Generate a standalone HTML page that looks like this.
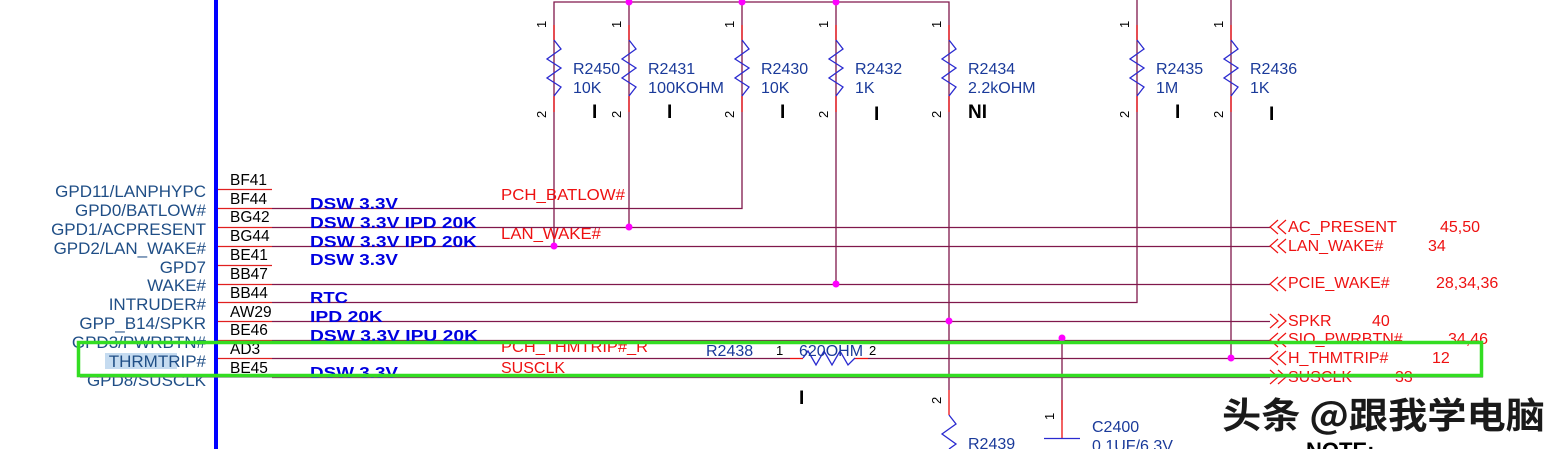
<!DOCTYPE html>
<html><head><meta charset="utf-8">
<style>
html,body{margin:0;padding:0;background:#fff;width:1561px;height:449px;overflow:hidden}
svg{display:block}
.pn{font:17px "Liberation Sans",sans-serif;fill:#1f4e86;text-anchor:end}
.pin{font:15.5px "Liberation Sans",sans-serif;fill:#000}
.bl{font:bold 16px "Liberation Sans",sans-serif;fill:#0000e0}
.rd{font:16px "Liberation Sans",sans-serif;fill:#ee1111}
.nv{font:16px "Liberation Sans",sans-serif;fill:#1a3a9a}
.sm{font:13px "Liberation Sans",sans-serif;fill:#000}
.I{font:bold 19px "Liberation Sans",sans-serif;fill:#000}
</style></head><body>
<svg width="1561" height="449" viewBox="0 0 1561 449" xmlns="http://www.w3.org/2000/svg">
<rect x="214" y="0" width="4" height="449" fill="#0000ff"/>
<rect x="105" y="353" width="72" height="16" fill="#9ec3e6" opacity="0.6"/>
<g class="pn">
<text x="206" y="197">GPD11/LANPHYPC</text>
<text x="206" y="216">GPD0/BATLOW#</text>
<text x="206" y="235">GPD1/ACPRESENT</text>
<text x="206" y="254">GPD2/LAN_WAKE#</text>
<text x="206" y="273">GPD7</text>
<text x="206" y="291">WAKE#</text>
<text x="206" y="310">INTRUDER#</text>
<text x="206" y="329">GPP_B14/SPKR</text>
<text x="206" y="348">GPD3/PWRBTN#</text>
<text x="206" y="367">THRMTRIP#</text>
<text x="206" y="386">GPD8/SUSCLK</text>
</g>
<g class="pin">
<text x="230" y="185">BF41</text><text x="230" y="204">BF44</text>
<text x="230" y="222">BG42</text><text x="230" y="241">BG44</text>
<text x="230" y="260">BE41</text><text x="230" y="279">BB47</text>
<text x="230" y="298">BB44</text><text x="230" y="317">AW29</text>
<text x="230" y="335">BE46</text><text x="230" y="354">AD3</text>
<text x="230" y="373">BE45</text>
</g>
<g stroke="#e02020" stroke-width="1.3">
<line x1="218" y1="189.5" x2="272" y2="189.5"/><line x1="218" y1="208.5" x2="272" y2="208.5"/>
<line x1="218" y1="227.5" x2="272" y2="227.5"/><line x1="218" y1="246.5" x2="272" y2="246.5"/>
<line x1="218" y1="265.5" x2="272" y2="265.5"/><line x1="218" y1="284.5" x2="272" y2="284.5"/>
<line x1="218" y1="302.5" x2="272" y2="302.5"/><line x1="218" y1="321.5" x2="272" y2="321.5"/>
<line x1="218" y1="340.5" x2="272" y2="340.5"/><line x1="218" y1="358.5" x2="272" y2="358.5"/>
</g>
<g stroke="#80184c" stroke-width="1.3" fill="none">
<polyline points="272,208.5 742,208.5 742,2"/>
<line x1="272" y1="227.5" x2="1270" y2="227.5"/>
<line x1="272" y1="246.5" x2="1270" y2="246.5"/>
<line x1="272" y1="284.5" x2="1270" y2="284.5"/>
<polyline points="272,302.5 1137,302.5 1137,0"/>
<line x1="272" y1="321.5" x2="1270" y2="321.5"/>
<line x1="272" y1="340.5" x2="1270" y2="340.5"/>
<line x1="272" y1="358.5" x2="790" y2="358.5"/>
<line x1="868" y1="358.5" x2="1270" y2="358.5"/>
<line x1="272" y1="377.5" x2="1270" y2="377.5"/>
<polyline points="554,246 554,2 949,2 949,390"/>
<line x1="629" y1="2" x2="629" y2="227"/>
<line x1="836" y1="2" x2="836" y2="284"/>
<line x1="1231" y1="0" x2="1231" y2="358"/>
<line x1="1062" y1="338" x2="1062" y2="420"/>
</g>
<g stroke="#ee1111" stroke-width="1.3">
<line x1="554" y1="25" x2="554" y2="40"/><line x1="554" y1="96" x2="554" y2="112"/>
<line x1="629" y1="25" x2="629" y2="40"/><line x1="629" y1="96" x2="629" y2="112"/>
<line x1="742" y1="25" x2="742" y2="40"/><line x1="742" y1="96" x2="742" y2="112"/>
<line x1="836" y1="25" x2="836" y2="40"/><line x1="836" y1="96" x2="836" y2="112"/>
<line x1="949" y1="25" x2="949" y2="40"/><line x1="949" y1="96" x2="949" y2="112"/>
<line x1="1137" y1="25" x2="1137" y2="40"/><line x1="1137" y1="96" x2="1137" y2="112"/>
<line x1="1231" y1="25" x2="1231" y2="40"/><line x1="1231" y1="96" x2="1231" y2="112"/>
<line x1="790" y1="358.5" x2="803" y2="358.5"/><line x1="855" y1="358.5" x2="868" y2="358.5"/>
<line x1="949" y1="390" x2="949" y2="415"/>
<line x1="1062" y1="400" x2="1062" y2="438"/>
</g>
<g stroke="#2a2ad0" stroke-width="1.3" fill="none">
<polyline points="554,40 561,49 547,59 561,68 547,78 561,87 554,96"/>
<polyline points="629,40 636,49 622,59 636,68 622,78 636,87 629,96"/>
<polyline points="742,40 749,49 735,59 749,68 735,78 749,87 742,96"/>
<polyline points="836,40 843,49 829,59 843,68 829,78 843,87 836,96"/>
<polyline points="949,40 956,49 942,59 956,68 942,78 956,87 949,96"/>
<polyline points="1137,40 1144,49 1130,59 1144,68 1130,78 1144,87 1137,96"/>
<polyline points="1231,40 1238,49 1224,59 1238,68 1224,78 1238,87 1231,96"/>
<polyline points="803,358 808,351 816,365 824,351 832,365 840,351 848,365 855,358"/>
<polyline points="949,415 956,424 942,434 956,444 949,449"/>
<line x1="1044" y1="438.5" x2="1080" y2="438.5"/>
</g>
<g fill="#ff00ff">
<circle cx="629" cy="2" r="3.5"/><circle cx="742" cy="2" r="3.5"/><circle cx="836" cy="2" r="3.5"/>
<circle cx="629" cy="227" r="3.5"/><circle cx="554" cy="246" r="3.5"/>
<circle cx="836" cy="284" r="3.5"/><circle cx="949" cy="321" r="3.5"/>
<circle cx="1062" cy="338" r="3.5"/><circle cx="1231" cy="358" r="3.5"/>
</g>
<g class="sm">
<text transform="translate(546,28) rotate(-90)">1</text><text transform="translate(546,118) rotate(-90)">2</text>
<text transform="translate(621,28) rotate(-90)">1</text><text transform="translate(621,118) rotate(-90)">2</text>
<text transform="translate(734,28) rotate(-90)">1</text><text transform="translate(734,118) rotate(-90)">2</text>
<text transform="translate(828,28) rotate(-90)">1</text><text transform="translate(828,118) rotate(-90)">2</text>
<text transform="translate(941,28) rotate(-90)">1</text><text transform="translate(941,118) rotate(-90)">2</text>
<text transform="translate(1129,28) rotate(-90)">1</text><text transform="translate(1129,118) rotate(-90)">2</text>
<text transform="translate(1223,28) rotate(-90)">1</text><text transform="translate(1223,118) rotate(-90)">2</text>
<text transform="translate(941,404) rotate(-90)">2</text>
<text transform="translate(1054,420) rotate(-90)">1</text>
<text x="776" y="355">1</text><text x="869" y="355">2</text>
</g>
<g class="nv">
<text x="573" y="74">R2450</text><text x="573" y="93">10K</text>
<text x="648" y="74">R2431</text><text x="648" y="93" textLength="76" lengthAdjust="spacingAndGlyphs">100KOHM</text>
<text x="761" y="74">R2430</text><text x="761" y="93">10K</text>
<text x="855" y="74">R2432</text><text x="855" y="93">1K</text>
<text x="968" y="74">R2434</text><text x="968" y="93">2.2kOHM</text>
<text x="1156" y="74">R2435</text><text x="1156" y="93">1M</text>
<text x="1250" y="74">R2436</text><text x="1250" y="93">1K</text>
<text x="706" y="356">R2438</text><text x="799" y="356">620OHM</text>
<text x="968" y="449">R2439</text>
<text x="1092" y="432">C2400</text><text x="1092" y="451">0.1UF/6.3V</text>
</g>
<g class="I">
<text x="592" y="118">I</text><text x="667" y="118">I</text><text x="780" y="118">I</text>
<text x="874" y="120">I</text><text x="968" y="118">NI</text><text x="1175" y="118">I</text>
<text x="1269" y="120">I</text><text x="799" y="404">I</text>
</g>
<g class="bl" lengthAdjust="spacingAndGlyphs">
<text x="310" y="209" textLength="88" lengthAdjust="spacingAndGlyphs">DSW 3.3V</text>
<text x="310" y="228" textLength="167" lengthAdjust="spacingAndGlyphs">DSW 3.3V IPD 20K</text>
<text x="310" y="247" textLength="167" lengthAdjust="spacingAndGlyphs">DSW 3.3V IPD 20K</text>
<text x="310" y="265" textLength="88" lengthAdjust="spacingAndGlyphs">DSW 3.3V</text>
<text x="310" y="303" textLength="38" lengthAdjust="spacingAndGlyphs">RTC</text>
<text x="310" y="322" textLength="73" lengthAdjust="spacingAndGlyphs">IPD 20K</text>
<text x="310" y="341" textLength="168" lengthAdjust="spacingAndGlyphs">DSW 3.3V IPU 20K</text>
<text x="310" y="378" textLength="88" lengthAdjust="spacingAndGlyphs">DSW 3.3V</text>
</g>
<g class="rd">
<text x="501" y="200" textLength="124" lengthAdjust="spacingAndGlyphs">PCH_BATLOW#</text>
<text x="501" y="239" textLength="100" lengthAdjust="spacingAndGlyphs">LAN_WAKE#</text>
<text x="501" y="352" textLength="147" lengthAdjust="spacingAndGlyphs">PCH_THMTRIP#_R</text>
<text x="501" y="373">SUSCLK</text>
<text x="1288" y="232" textLength="109" lengthAdjust="spacingAndGlyphs">AC_PRESENT</text><text x="1440" y="232">45,50</text>
<text x="1288" y="251">LAN_WAKE#</text><text x="1428" y="251">34</text>
<text x="1288" y="288">PCIE_WAKE#</text><text x="1436" y="288">28,34,36</text>
<text x="1288" y="326">SPKR</text><text x="1372" y="326">40</text>
<text x="1288" y="344">SIO_PWRBTN#</text><text x="1448" y="344">34,46</text>
<text x="1288" y="363">H_THMTRIP#</text><text x="1432" y="363">12</text>
<text x="1288" y="382">SUSCLK</text><text x="1395" y="382">33</text>
</g>
<g stroke="#ee1111" stroke-width="1.2" fill="none">
<polyline points="1278,220 1270,227 1278,234"/><polyline points="1286,220 1278,227 1286,234"/>
<polyline points="1278,239 1270,246 1278,253"/><polyline points="1286,239 1278,246 1286,253"/>
<polyline points="1278,277 1270,284 1278,291"/><polyline points="1286,277 1278,284 1286,291"/>
<polyline points="1270,314 1278,321 1270,328"/><polyline points="1278,314 1286,321 1278,328"/>
<polyline points="1278,333 1270,340 1278,347"/><polyline points="1286,333 1278,340 1286,347"/>
<polyline points="1278,351 1270,358 1278,365"/><polyline points="1286,351 1278,358 1286,365"/>
<polyline points="1270,370 1278,377 1270,384"/><polyline points="1278,370 1286,377 1278,384"/>
</g>
<rect x="78.5" y="342.5" width="1403" height="33" fill="none" stroke="#33dd22" stroke-width="3.5"/>
<line x1="80" y1="377.5" x2="1483" y2="377.5" stroke="#777" stroke-width="1" opacity="0.5"/>
<text x="1222" y="428" textLength="323" lengthAdjust="spacingAndGlyphs" style="font:bold 36px 'Noto Sans CJK SC',sans-serif;fill:#1a1a1a">头条 @跟我学电脑</text>
<text x="1306" y="458" style="font:bold 22px 'Liberation Sans',sans-serif;fill:#000">NOTE:</text>
</svg>
</body></html>
